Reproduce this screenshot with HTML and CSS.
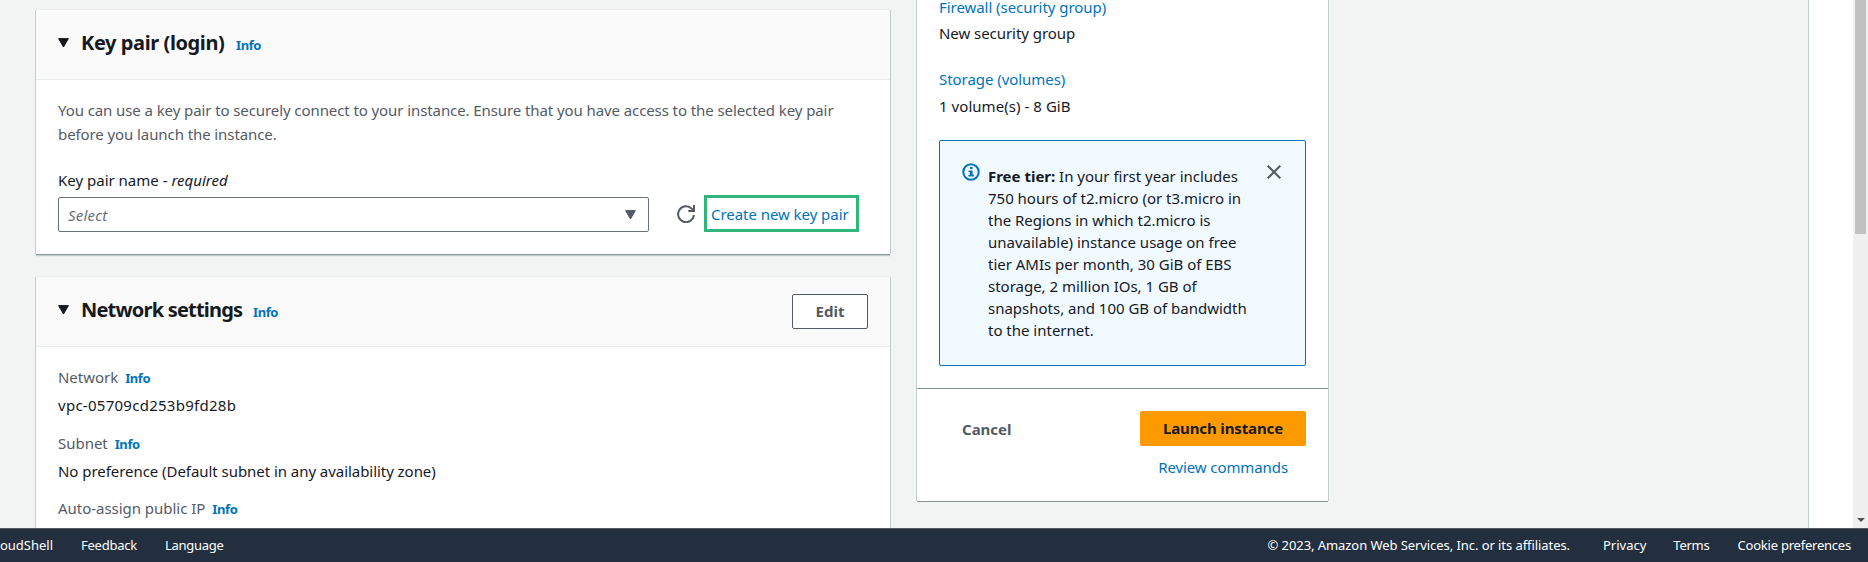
FILE: index.html
```html
<!DOCTYPE html>
<html lang="en">
<head>
<meta charset="utf-8">
<title>Launch an instance</title>
<link rel="stylesheet" href="styles.css">
</head>
<body>
<div class="app">
  <div class="viewport">
    <main class="content">
      <section class="settings">
        <div class="card">
          <header class="card-header">
            <svg class="caret" viewBox="0 0 11 10"><path d="M.6.6h9.8L5.5 9z"/></svg>
            <h2 class="title t-key">Key pair (login)</h2>
            <a class="info">Info</a>
          </header>
          <div class="card-body">
            <p class="description">You can use a key pair to securely connect to your instance. Ensure that you have access to the selected key pair<br>before you launch the instance.</p>
            <div class="label">Key pair name - <i>required</i></div>
            <div class="key-row">
              <div class="select"><span class="placeholder">Select</span><svg class="caret muted" viewBox="0 0 11 10"><path d="M.6.6h9.8L5.5 9z"/></svg></div>
              <svg class="refresh" viewBox="0 0 18 18"><path d="M16.900 10A7.900 7.900 0 1 1 14.600 3.600L16 5M17 0V5.900H11.200"/></svg>
              <a class="link create">Create new key pair</a>
            </div>
          </div>
        </div>
        <div class="card">
          <header class="card-header">
            <svg class="caret" viewBox="0 0 11 10"><path d="M.6.6h9.8L5.5 9z"/></svg>
            <h2 class="title t-net">Network settings</h2>
            <a class="info">Info</a>
            <button class="button edit">Edit</button>
          </header>
          <div class="card-body fields">
            <div class="field"><div class="name"><span>Network</span><a class="info">Info</a></div><div class="value vpc">vpc-05709cd253b9fd28b</div></div>
            <div class="field"><div class="name"><span>Subnet</span><a class="info">Info</a></div><div class="value">No preference (Default subnet in any availability zone)</div></div>
            <div class="field"><div class="name"><span>Auto-assign public IP</span><a class="info">Info</a></div></div>
          </div>
        </div>
      </section>
      <aside class="summary">
        <div class="summary-body">
          <div class="item"><a class="link">Firewall (security group)</a><span>New security group</span></div>
          <div class="item"><a class="link">Storage (volumes)</a><span class="volumes">1 volume(s) - 8 GiB</span></div>
          <div class="alert">
            <svg class="alert-icon" viewBox="0 0 18 18"><circle cx="9" cy="9" r="7.7"/><path d="M8 4h2.6v2H8zM6.6 7.4h4v4.4H12V13.4H6.4v-1.6H8V9H6.600z"/></svg>
            <p class="alert-text"><b>Free tier:</b> In your first year includes<br>750 hours of t2.micro (or t3.micro in<br>the Regions in which t2.micro is<br>unavailable) instance usage on free<br>tier AMIs per month, 30 GiB of EBS<br>storage, 2 million IOs, 1 GB of<br>snapshots, and 100 GB of bandwidth<br>to the internet.</p>
            <svg class="close" viewBox="0 0 14 14"><path d="M.7.7l12.600 12.600M13.300.7L.7 13.300"/></svg>
          </div>
        </div>
        <div class="summary-footer">
          <a class="cancel">Cancel</a>
          <div class="actions">
            <button class="button primary">Launch instance</button>
            <a class="link review">Review commands</a>
          </div>
        </div>
      </aside>
    </main>
    <div class="tools"></div>
    <div class="scrollbar"><div class="thumb"></div><svg class="arrow" viewBox="0 0 8 4"><path d="M0 0h8L4 4z"/></svg></div>
  </div>
  <footer class="footer">
    <div class="footer-left"><a class="shell">CloudShell</a><a class="feedback">Feedback</a><a class="language">Language</a></div>
    <div class="footer-right"><span class="copyright">© 2023, Amazon Web Services, Inc. or its affiliates.</span><a class="privacy">Privacy</a><a class="terms">Terms</a><a class="cookie">Cookie preferences</a></div>
  </footer>
</div>
</body>
</html>
```
FILE: styles.css
```css
* { box-sizing: border-box; }
body { margin: 0; overflow: hidden; font: 15px/24px "Noto Sans", sans-serif; color: #16191f; white-space: nowrap; }
h2, p { margin: 0; }
svg { display: block; flex: none; }
.app { width: 1868px; height: 562px; display: flex; flex-direction: column; overflow: hidden; }
.viewport { height: 528px; display: flex; overflow: hidden; }
.content { flex: 1; display: flex; align-items: flex-start; gap: 27px; padding-left: 36px; background: #f2f3f3; }
.settings { width: 854px; padding-top: 10px; display: flex; flex-direction: column; gap: 23px; }
.card { background: #fff; box-shadow: 0 -1px 0 #eaeded, -1px 0 0 #c5cccd, 1px 0 0 #c5cccd, 0 1px 0 #879596, 0 2px 1px #c5cccd; }
.card-header { height: 70px; display: flex; align-items: center; padding: 0 22px; background: #fafafa; border-bottom: 1px solid #eaeded; }
.caret { width: 11px; height: 10px; fill: #16191f; stroke: #16191f; stroke-width: 1; stroke-linejoin: round; }
.caret.muted { fill: #545b64; stroke: #545b64; }
.card-header .caret { margin-top: -3px; }
.title { width: 142px; margin: -3px 13px 0 12px; font-size: 20px; font-weight: 700; line-height: 28px; }
.t-key { letter-spacing: -0.4px; }
.t-net { width: 159px; letter-spacing: -0.8px; }
.link, .info { color: #0073bb; }
.info { font-size: 13px; font-weight: 700; line-height: 16px; letter-spacing: -0.4px; }
.card-body { padding: 18px 22px 22px; }
.description { color: #545b64; letter-spacing: -0.09px; }
.label { margin: 22px 0 5px; }
.key-row { display: flex; height: 35px; align-items: center; }
.select { width: 591px; height: 35px; display: flex; align-items: center; justify-content: space-between; padding: 0 12px 0 9px; border: 1px solid #687078; border-radius: 2px; }
.placeholder { color: #687078; font-style: italic; letter-spacing: 0.2px; }
.refresh { width: 18px; height: 18px; margin: -1px 9px 0 28px; fill: none; stroke: #545b64; stroke-width: 2; }
.create { width: 155px; height: 37px; margin-top: -3px; padding-left: 4px; border: 3px solid #2eb67d; line-height: 33px; letter-spacing: -0.05px; }
.button { height: 35px; padding: 0; font: 700 15px/31px "Noto Sans", sans-serif; border: 1px solid #545b64; border-radius: 2px; background: #fff; color: #545b64; }
.edit { width: 76px; margin: -1px 0 0 auto; }
.fields { height: 181px; display: flex; flex-direction: column; gap: 14px; overflow: hidden; }
.field:last-child { margin-top: -1px; }
.name { height: 24px; display: flex; align-items: baseline; gap: 7px; color: #545b64; letter-spacing: -0.03px; }
.value { margin-top: 4px; letter-spacing: -0.05px; }
.vpc { letter-spacing: 0.27px; }
.summary { width: 411px; background: #fff; box-shadow: -1px 0 0 #c5cccd, 1px 0 0 #c5cccd, 0 1px 0 #879596; }
.summary-body { height: 389px; display: flex; flex-direction: column; padding: 0 22px; border-bottom: 1px solid #879596; letter-spacing: -0.05px; }
.item { display: flex; flex-direction: column; gap: 3px; margin-bottom: 22px; }
.item:first-child { margin-top: -5px; gap: 2px; }
.volumes { letter-spacing: 0.05px; }
.alert { height: 226px; display: flex; align-items: flex-start; padding: 22px 24px 0 22px; border: 1px solid #0073bb; border-radius: 2px; background: #f1faff; letter-spacing: -0.01px; }
.alert-icon { width: 18px; height: 18px; fill: #0073bb; }
.alert-icon circle { fill: none; stroke: #0073bb; stroke-width: 2; }
.alert-text { margin: 2px auto 0 8px; line-height: 22px; }
.close { width: 14px; height: 14px; margin-top: 2px; stroke: #545b64; stroke-width: 2; }
.summary-footer { height: 112px; display: flex; justify-content: space-between; padding: 22px 22px 0 45px; }
.cancel { font-weight: 700; color: #545b64; line-height: 36px; }
.actions { display: flex; flex-direction: column; align-items: flex-end; gap: 9px; }
.primary { width: 166px; background: #ff9900; border-color: #ff9900; color: #16191f; line-height: 33px; letter-spacing: -0.12px; }
.review { margin-right: 18px; letter-spacing: -0.1px; }
.tools { width: 45px; background: #fff; border-left: 1px solid #c5cccd; }
.scrollbar { width: 15px; display: flex; flex-direction: column; justify-content: space-between; align-items: center; background: #f0f0f0; padding-bottom: 6px; }
.thumb { width: 11px; height: 234px; background: #c1c1c1; }
.arrow { width: 8px; height: 4px; fill: #505050; }
.footer { height: 34px; display: flex; justify-content: space-between; padding: 0 17px 0 0; border-top: 1px solid #545b64; background: #232f3e; color: #fff; font-size: 13px; line-height: 33px; }
.footer-left, .footer-right { display: flex; }
.footer-left { gap: 28px; letter-spacing: -0.25px; }
.footer-left a { flex: none; }
.shell { width: 53px; display: flex; justify-content: flex-end; letter-spacing: 0; }
.copyright { margin-right: 33px; letter-spacing: -0.07px; }
.privacy { margin-right: 27px; }
.terms { margin-right: 28px; letter-spacing: -0.25px; }
.cookie { letter-spacing: -0.22px; }
```
